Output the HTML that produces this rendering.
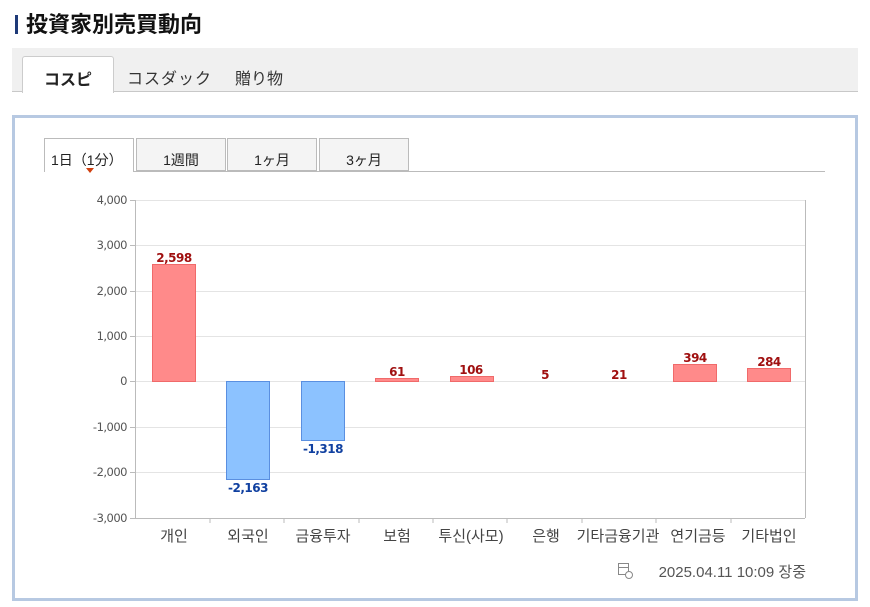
<!DOCTYPE html>
<html><head><meta charset="utf-8"><style>
body{margin:0;background:#fff;width:870px;height:607px;overflow:hidden;font-family:"Liberation Sans","Noto Sans CJK JP",sans-serif;position:relative}
.t{position:absolute;left:15px;top:7px;font-size:22px;font-weight:bold;color:#111;letter-spacing:0px}
.t:before{content:"";display:inline-block;width:3px;height:19px;background:#1e3a78;margin-right:8px;vertical-align:-2px}
.bar{position:absolute;left:12px;top:48px;width:846px;height:43px;background:#f0f0f0;border-bottom:1px solid #c8c8c8}
.tab{position:absolute;top:56px;height:36px;font-size:16px;color:#333;line-height:48px}
.act{left:22px;width:90px;background:#fff;border:1px solid #ccc;border-bottom:none;border-radius:3px 3px 0 0;text-align:center;font-weight:bold;color:#222}
.box{position:absolute;left:12px;top:115px;width:840px;height:480px;border:3px solid #b7c9e2;background:#fff}
.st{position:absolute;top:138px;height:33px;width:90px;border:1px solid #bbb;background:#f4f4f4;font-size:14px;text-align:center;line-height:42px;color:#222;box-sizing:border-box}
</style></head><body>
<div class="t">投資家別売買動向</div>
<div class="bar"></div>
<div class="tab act">コスピ</div>
<div class="tab" style="left:127px;letter-spacing:1px">コスダック</div>
<div class="tab" style="left:235px">贈り物</div>
<div class="box"></div>
<div style="position:absolute;left:44px;top:171px;width:781px;height:1px;background:#bbb"></div>
<div class="st" style="left:44px;background:#fff;border-bottom:none;height:34px;text-align:left;padding-left:6px">1日（1分）</div>
<div class="st" style="left:136px">1週間</div>
<div class="st" style="left:227px">1ヶ月</div>
<div class="st" style="left:319px">3ヶ月</div>
<svg style="position:absolute;left:86px;top:168px" width="8" height="5"><path d="M0 0H8L4 5Z" fill="#d04010"/></svg>
<svg style="position:absolute;left:0;top:0" width="870" height="607" font-family="Liberation Sans, Noto Sans CJK KR, sans-serif">
<g stroke="#e4e4e4" stroke-width="1">
<line x1="135" x2="805" y1="200.5" y2="200.5"/><line x1="135" x2="805" y1="245.5" y2="245.5"/><line x1="135" x2="805" y1="291.5" y2="291.5"/><line x1="135" x2="805" y1="336.5" y2="336.5"/><line x1="135" x2="805" y1="381.5" y2="381.5"/><line x1="135" x2="805" y1="427.5" y2="427.5"/><line x1="135" x2="805" y1="472.5" y2="472.5"/>
</g>
<g stroke="#bbb"><line x1="135.5" x2="135.5" y1="200" y2="518"/><line x1="805.5" x2="805.5" y1="200" y2="518"/><line x1="135" x2="805" y1="518.5" y2="518.5"/>
<line x1="130" x2="135" y1="200.5" y2="200.5"/><line x1="130" x2="135" y1="245.5" y2="245.5"/><line x1="130" x2="135" y1="291.5" y2="291.5"/><line x1="130" x2="135" y1="336.5" y2="336.5"/><line x1="130" x2="135" y1="381.5" y2="381.5"/><line x1="130" x2="135" y1="427.5" y2="427.5"/><line x1="130" x2="135" y1="472.5" y2="472.5"/><line x1="130" x2="135" y1="518.5" y2="518.5"/>
<line x1="210" x2="210" y1="518" y2="523"/><line x1="284" x2="284" y1="518" y2="523"/><line x1="359" x2="359" y1="518" y2="523"/><line x1="433" x2="433" y1="518" y2="523"/><line x1="507" x2="507" y1="518" y2="523"/><line x1="582" x2="582" y1="518" y2="523"/><line x1="656" x2="656" y1="518" y2="523"/><line x1="731" x2="731" y1="518" y2="523"/>
</g>
<g font-size="11.5" fill="#555" text-anchor="end" font-family="DejaVu Sans, sans-serif" letter-spacing="-0.5">
<text x="127" y="204">4,000</text><text x="127" y="249">3,000</text><text x="127" y="295">2,000</text><text x="127" y="340">1,000</text><text x="127" y="385">0</text><text x="127" y="431">-1,000</text><text x="127" y="476">-2,000</text><text x="127" y="522">-3,000</text>
</g>
<g fill="#ff8a8a" stroke="#f06a6a">
<rect x="152.5" y="264.5" width="43" height="117"/>
<rect x="375.5" y="378.5" width="43" height="3"/>
<rect x="450.5" y="376.5" width="43" height="5"/>
<rect x="673.5" y="364.5" width="43" height="17"/>
<rect x="747.5" y="368.5" width="43" height="13"/>
</g>
<g fill="#8cc2ff" stroke="#5a8fe0">
<rect x="226.5" y="381.5" width="43" height="98"/>
<rect x="301.5" y="381.5" width="43" height="59"/>
</g>
<g font-size="12" fill="#a01010" text-anchor="middle" font-family="DejaVu Sans, sans-serif" font-weight="bold" letter-spacing="-0.5">
<text x="174" y="262">2,598</text><text x="397" y="376">61</text><text x="471" y="374">106</text><text x="545" y="379">5</text><text x="619" y="379">21</text><text x="695" y="362">394</text><text x="769" y="366">284</text>
</g>
<g font-size="12" fill="#1040a0" text-anchor="middle" font-family="DejaVu Sans, sans-serif" font-weight="bold" letter-spacing="-0.5"><text x="248" y="492">-2,163</text><text x="323" y="453">-1,318</text></g>
<g font-size="15" fill="#444" text-anchor="middle">
<text x="174" y="541">개인</text><text x="248" y="541">외국인</text><text x="323" y="541">금융투자</text><text x="397" y="541">보험</text><text x="471" y="541">투신(사모)</text><text x="546" y="541">은행</text><text x="618" y="541">기타금융기관</text><text x="698" y="541">연기금등</text><text x="769" y="541">기타법인</text>
</g>
<g stroke="#888" fill="none"><rect x="618.5" y="563.5" width="10" height="11"/><line x1="618" x2="629" y1="567.5" y2="567.5"/><circle cx="629" cy="575" r="3.5" fill="#fff"/></g>
<text x="806" y="577" font-size="15" fill="#555" text-anchor="end">2025.04.11 10:09 장중</text>
</svg>
</body></html>
